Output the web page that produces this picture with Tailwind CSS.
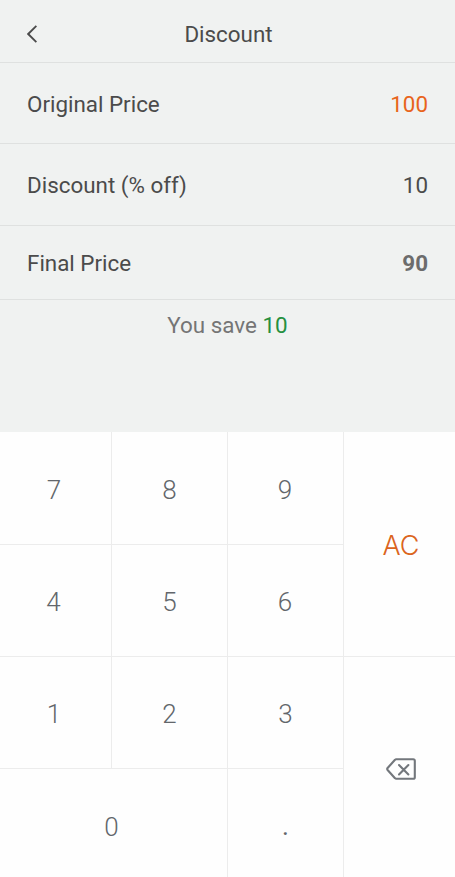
<!DOCTYPE html>
<html lang="en">
<head>
    <meta charset="UTF-8">
    <meta name="viewport" content="width=device-width, initial-scale=1.0">
    <title>Discount</title>
    <script src="https://cdn.jsdelivr.net/npm/@tailwindcss/browser@4"></script>
</head>
<body class="bg-[#f0f2f1]">
    <div class="h-[877px] w-[455px] flex flex-col overflow-hidden font-['Roboto',sans-serif] text-[22.4px] text-[#4b4b4b]">
        <header class="h-[63px] shrink-0 grid grid-cols-[1fr_auto_1fr] items-center pt-1.5 pl-[27px] pr-[25px] border-b border-[#dfe1e0]">
            <button type="button" aria-label="Back" class="w-5">
                <svg class="w-[10px] h-[18px]" viewBox="0 0 10 18" fill="none" stroke="currentColor" stroke-width="1.9">
                    <path d="M9.4 0.8L1.2 9L9.4 17.2"/>
                </svg>
            </button>
            <h1 class="pt-0.5">Discount</h1>
        </header>

        <div class="h-[81px] shrink-0 flex items-center justify-between px-[27px] pt-[3px] border-b border-[#dfe1e0]">
            <span>Original Price</span>
            <span class="text-[#e8641b]">100</span>
        </div>
        <div class="h-[82px] shrink-0 flex items-center justify-between px-[27px] pt-[3px] border-b border-[#dfe1e0]">
            <span>Discount (% off)</span>
            <span>10</span>
        </div>
        <div class="h-[74px] shrink-0 flex items-center justify-between px-[27px] pt-0.5 border-b border-[#dfe1e0]">
            <span>Final Price</span>
            <span class="font-bold text-[#6c6c6c]">90</span>
        </div>
        <p class="h-[132px] shrink-0 pt-[9px] text-center text-[#757575]">You save <span class="text-[#259040]">10</span></p>

        <!-- keypad -->
        <div class="h-[449px] shrink-0 grid grid-cols-[112px_116px_116px_111px] grid-rows-[113px_112px_112px_112px] bg-[#fefefe] text-[26px] font-light text-[#62666b]">
            <button type="button" class="pr-[3px] pt-1 border-r border-b border-[#ececec]">7</button>
            <button type="button" class="pt-1 border-r border-b border-[#ececec]">8</button>
            <button type="button" class="pr-px pt-1 border-r border-b border-[#ececec]">9</button>
            <button type="button" class="row-span-2 pl-[3px] pt-1 border-b border-[#ececec] font-['Inter',sans-serif] text-[27px] text-[#db6420]">AC</button>
            <button type="button" class="pr-1 pt-1 border-r border-b border-[#ececec]">4</button>
            <button type="button" class="pt-1 border-r border-b border-[#ececec]">5</button>
            <button type="button" class="pr-px pt-1 border-r border-b border-[#ececec]">6</button>
            <button type="button" class="pr-[3px] pt-1 border-r border-b border-[#ececec]">1</button>
            <button type="button" class="pt-1 border-r border-b border-[#ececec]">2</button>
            <button type="button" class="pt-1 border-r border-b border-[#ececec]">3</button>
            <button type="button" aria-label="Delete" class="row-span-2 flex items-center justify-center pl-0.5 pb-px text-[#73777c]">
                <svg class="w-[30px] h-[22px]" viewBox="0 0 30 22" fill="none" stroke="currentColor" stroke-width="2.1" stroke-linecap="round" stroke-linejoin="round">
                    <path d="M10.2 1.2H27.2Q28.8 1.2 28.8 2.8V19.2Q28.8 20.8 27.2 20.8H10.2Q9.5 20.8 9 20.2L1.6 12Q0.8 11 1.6 10L9 1.8Q9.5 1.2 10.2 1.2Z"/>
                    <path d="M13 7L22.4 16.4M22.4 7L13 16.4"/>
                </svg>
            </button>
            <button type="button" class="col-span-2 pr-1 pt-1 border-r border-[#ececec]">0</button>
            <button type="button" class="pt-0.5 border-r border-[#ececec] font-normal">.</button>
        </div>
    </div>
</body>
</html>
